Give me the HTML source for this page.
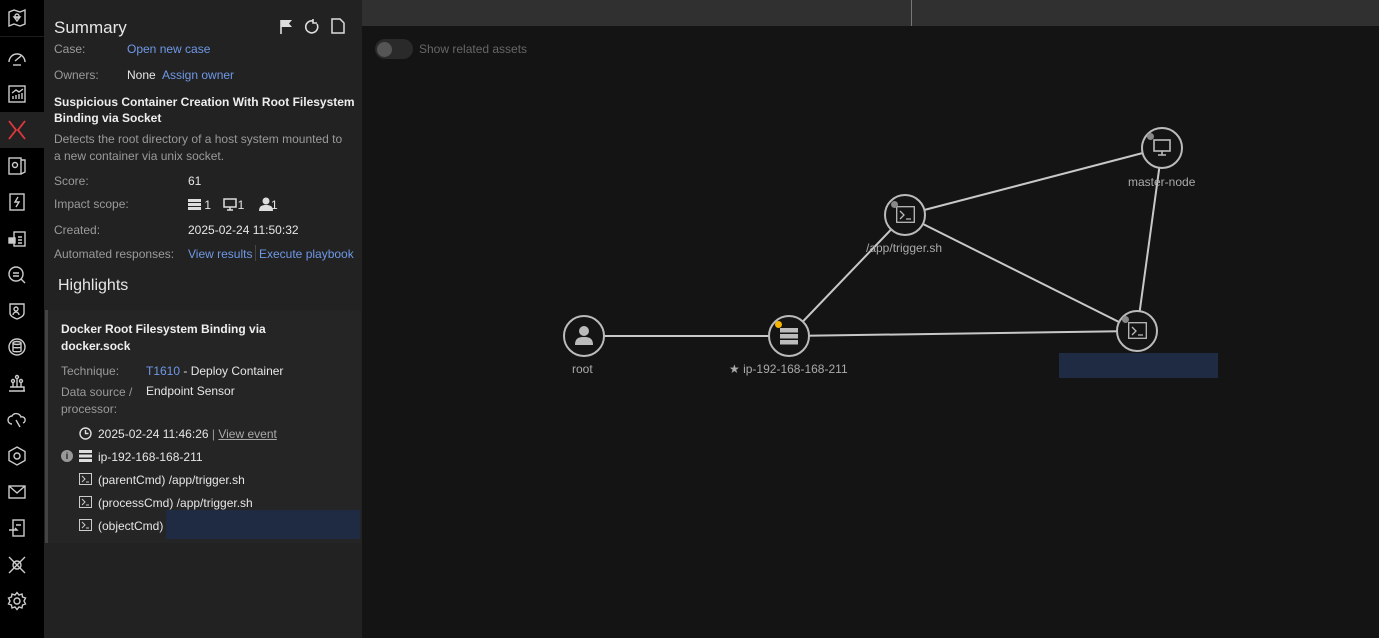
<!DOCTYPE html>
<html><head><meta charset="utf-8"><style>
*{box-sizing:border-box;margin:0;padding:0}
body{width:1379px;height:638px;background:#141414;font-family:"Liberation Sans",Helvetica,sans-serif;overflow:hidden;position:relative;color:#ddd}
.side{position:absolute;left:0;top:0;width:44px;height:638px;background:#000}
.side svg{position:absolute;left:7px;width:20px;height:20px}
.panel{position:absolute;left:44px;top:0;width:318px;height:638px;background:#222}
.top{position:absolute;left:362px;top:0;width:1017px;height:26px;background:#303030}
.t{position:absolute;font-size:12px;white-space:nowrap}
.lbl{color:#9a9a9a}
.lnk{color:#6f98e6}
.w{color:#e6e6e6}
.b{font-weight:bold;color:#eee;font-size:12px}
.node{position:absolute;width:42px;height:42px;border:2px solid #bbb;border-radius:50%;background:#141414}
.nl{position:absolute;font-size:12px;color:#aaa;white-space:nowrap}
</style></head><body>
<div class="side">
<div style="position:absolute;left:0;top:112px;width:44px;height:36px;background:#222"></div>
<div style="position:absolute;left:0;top:36px;width:44px;height:1px;background:#1c1c1c"></div>
<svg style="top:8px" viewBox="0 0 20 20" fill="none" stroke="#ccc" stroke-width="1.4"><path d="M2 4l5-2 6 2 5-2v14l-5 2-6-2-5 2z"/><circle cx="10" cy="8" r="2"/><path d="M10 13l-3-4h6z"/></svg>
<svg style="top:48px" viewBox="0 0 20 20" fill="none" stroke="#ccc" stroke-width="1.4"><path d="M2 14a8 8 0 0116 0"/><path d="M8 13l6-5"/><path d="M6 17h8"/></svg>
<svg style="top:84px" viewBox="0 0 20 20" fill="none" stroke="#ccc" stroke-width="1.4"><rect x="2" y="2" width="16" height="16"/><path d="M6 15v-3M9 15v-4M12 15v-5M15 15v-6M5 9l4-3 3 2 4-3"/></svg>
<svg style="top:120px" viewBox="0 0 20 20" fill="none" stroke="#e0383c" stroke-width="1.8"><path d="M2 1l7 9-7 9M18 1l-7 9 7 9"/></svg>
<svg style="top:156px" viewBox="0 0 20 20" fill="none" stroke="#ccc" stroke-width="1.4"><rect x="2" y="2" width="12" height="16"/><path d="M14 4h4v12l-4 2"/><circle cx="8" cy="9" r="2.5"/></svg>
<svg style="top:192px" viewBox="0 0 20 20" fill="none" stroke="#ccc" stroke-width="1.4"><rect x="3" y="2" width="14" height="16"/><path d="M11 5l-3 5h4l-3 5" /></svg>
<svg style="top:229px" viewBox="0 0 20 20" fill="none" stroke="#ccc" stroke-width="1.4"><rect x="7" y="3" width="11" height="14"/><rect x="2" y="9" width="6" height="5" fill="#ccc"/><path d="M11 8h4M11 11h4M11 14h4"/></svg>
<svg style="top:265px" viewBox="0 0 20 20" fill="none" stroke="#ccc" stroke-width="1.4"><circle cx="9" cy="9" r="7"/><path d="M6 8h6M6 11h6M14 14l4 4"/></svg>
<svg style="top:301px" viewBox="0 0 20 20" fill="none" stroke="#ccc" stroke-width="1.4"><path d="M3 3h14v9c0 3-4 5-7 6-3-1-7-3-7-6z"/><circle cx="9" cy="8" r="2"/><path d="M6 14c0-2 2-3 3-3s3 1 3 3"/></svg>
<svg style="top:337px" viewBox="0 0 20 20" fill="none" stroke="#ccc" stroke-width="1.4"><circle cx="10" cy="10" r="8"/><ellipse cx="10" cy="6" rx="4" ry="1.5"/><path d="M6 6v8c0 1 8 1 8 0V6M6 10c0 1 8 1 8 0"/></svg>
<svg style="top:374px" viewBox="0 0 20 20" fill="none" stroke="#ccc" stroke-width="1.4"><path d="M2 17h16M3 13h14v4M6 13V9M10 13V5M14 13V9"/><circle cx="6" cy="7" r="1.5"/><circle cx="10" cy="3" r="1.5"/><circle cx="14" cy="7" r="1.5"/></svg>
<svg style="top:410px" viewBox="0 0 20 20" fill="none" stroke="#ccc" stroke-width="1.4"><path d="M5 14a4 4 0 010-8 5 5 0 019 1 3 3 0 012 6"/><path d="M9 10l4 7"/></svg>
<svg style="top:446px" viewBox="0 0 20 20" fill="none" stroke="#ccc" stroke-width="1.4"><path d="M10 1l8 4.5v9L10 19l-8-4.5v-9z"/><circle cx="10" cy="10" r="3"/></svg>
<svg style="top:482px" viewBox="0 0 20 20" fill="none" stroke="#ccc" stroke-width="1.4"><rect x="2" y="4" width="16" height="12"/><path d="M2 4l8 7 8-7"/></svg>
<svg style="top:518px" viewBox="0 0 20 20" fill="none" stroke="#ccc" stroke-width="1.4"><rect x="6" y="2" width="11" height="16"/><path d="M2 12h8l-2-2M9 7h5"/></svg>
<svg style="top:555px" viewBox="0 0 20 20" fill="none" stroke="#ccc" stroke-width="1.4"><path d="M2 2l16 16M18 2L2 18"/><circle cx="10" cy="10" r="4"/></svg>
<svg style="top:591px" viewBox="0 0 20 20" fill="none" stroke="#ccc" stroke-width="1.4"><circle cx="10" cy="10" r="3"/><path d="M10 1.5l2 2.5 3-1 .5 3 3 1-1.5 3 1.5 3-3 1-.5 3-3-1-2 2.5-2-2.5-3 1-.5-3-3-1L3 10 1.5 7l3-1 .5-3 3 1z"/></svg>
</div>
<div class="panel">
<div style="position:absolute;left:1px;top:310px;width:316px;height:233px;background:#252525;border-left:3px solid #444"></div>
<div style="position:absolute;left:122px;top:510px;width:194px;height:29px;background:#1f2b42"></div>
</div>
<div class="top"><div style="position:absolute;left:549px;top:0;width:1px;height:26px;background:#777"></div></div>

<div class="t w" style="left:54px;top:18px;font-size:17px">Summary</div>
<svg style="position:absolute;left:279px;top:19px" width="14" height="15" viewBox="0 0 14 15"><path d="M2 1v14" stroke="#ddd" stroke-width="1.6"/><path d="M2 1h11l-3 3.5 3 3.5H2z" fill="#ddd"/></svg>
<svg style="position:absolute;left:304px;top:19px" width="16" height="16" viewBox="0 0 16 16" fill="none" stroke="#ddd" stroke-width="1.6"><path d="M13 5a6 6 0 11-4-3"/><path d="M9 0v4h4" /></svg>
<svg style="position:absolute;left:331px;top:18px" width="14" height="16" viewBox="0 0 14 16" fill="none" stroke="#ddd" stroke-width="1.5"><path d="M1 1h8l4 4v10H1z"/></svg>
<div class="t lbl" style="left:54px;top:42px">Case:</div><div class="t lnk" style="left:127px;top:42px">Open new case</div>
<div class="t lbl" style="left:54px;top:68px">Owners:</div><div class="t w" style="left:127px;top:68px">None</div><div class="t lnk" style="left:162px;top:68px">Assign owner</div>
<div class="t b" style="left:54px;top:94px;line-height:16px">Suspicious Container Creation With Root Filesystem<br>Binding via Socket</div>
<div class="t lbl" style="left:54px;top:131px;line-height:16.5px">Detects the root directory of a host system mounted to<br>a new container via unix socket.</div>
<div class="t lbl" style="left:54px;top:174px">Score:</div><div class="t w" style="left:188px;top:174px">61</div>
<div class="t lbl" style="left:54px;top:197px">Impact scope:</div>
<div class="t w" style="left:188px;top:198px"><span style="display:inline-block;width:13px;height:11px;background:repeating-linear-gradient(#ddd 0 3px,#222 3px 4px);vertical-align:-1px"></span> 1 &nbsp;&nbsp;&nbsp;&nbsp;&nbsp;&nbsp;&nbsp;1 &nbsp;&nbsp;&nbsp;&nbsp;&nbsp;&nbsp;&nbsp;1</div>
<svg style="position:absolute;left:223px;top:198px" width="14" height="13" viewBox="0 0 14 13" fill="none" stroke="#ddd" stroke-width="1.5"><rect x="1" y="1" width="12" height="8"/><path d="M7 9v3M4 12h6"/></svg>
<svg style="position:absolute;left:259px;top:197px" width="14" height="14" viewBox="0 0 14 14" fill="#ddd"><circle cx="7" cy="4" r="3.5"/><path d="M0 14c0-5 3-6 7-6s7 1 7 6z"/></svg>
<div class="t lbl" style="left:54px;top:223px">Created:</div><div class="t w" style="left:188px;top:223px">2025-02-24 11:50:32</div>
<div class="t lbl" style="left:54px;top:247px">Automated responses:</div><div class="t lnk" style="left:188px;top:247px">View results</div>
<div style="position:absolute;left:255px;top:245px;width:1px;height:16px;background:#444"></div>
<div class="t lnk" style="left:259px;top:247px">Execute playbook</div>
<div class="t w" style="left:58px;top:277px;font-size:16px">Highlights</div>
<div class="t b" style="left:61px;top:321px;line-height:16.5px">Docker Root Filesystem Binding via<br>docker.sock</div>
<div class="t lbl" style="left:61px;top:364px">Technique:</div><div class="t w" style="left:146px;top:364px"><span class="lnk">T1610</span> - Deploy Container</div>
<div class="t lbl" style="left:61px;top:384px;line-height:16.5px">Data source /<br>processor:</div><div class="t w" style="left:146px;top:384px">Endpoint Sensor</div>
<svg style="position:absolute;left:79px;top:427px" width="13" height="13" viewBox="0 0 13 13" fill="none" stroke="#ddd" stroke-width="1.4"><circle cx="6.5" cy="6.5" r="5.5"/><path d="M6.5 3v3.5h3"/></svg>
<div class="t w" style="left:98px;top:427px">2025-02-24 11:46:26 <span class="lbl">|</span> <span style="color:#aaa;text-decoration:underline">View event</span></div>
<div style="position:absolute;left:61px;top:450px;width:12px;height:12px;border-radius:50%;background:#999;color:#222;font-size:9px;font-weight:bold;text-align:center;line-height:12px">i</div>
<span style="position:absolute;left:79px;top:450px;width:13px;height:12px;background:repeating-linear-gradient(#ddd 0 3px,#252525 3px 4.5px)"></span>
<div class="t w" style="left:98px;top:450px">ip-192-168-168-211</div>
<svg style="position:absolute;left:79px;top:473px" width="13" height="12" viewBox="0 0 13 12" fill="none" stroke="#ccc"><rect x=".5" y=".5" width="12" height="11"/><path d="M3 3l3 3-3 3M7 9h3"/></svg>
<div class="t w" style="left:98px;top:473px">(parentCmd) /app/trigger.sh</div>
<svg style="position:absolute;left:79px;top:496px" width="13" height="12" viewBox="0 0 13 12" fill="none" stroke="#ccc"><rect x=".5" y=".5" width="12" height="11"/><path d="M3 3l3 3-3 3M7 9h3"/></svg>
<div class="t w" style="left:98px;top:496px">(processCmd) /app/trigger.sh</div>
<svg style="position:absolute;left:79px;top:519px" width="13" height="12" viewBox="0 0 13 12" fill="none" stroke="#ccc"><rect x=".5" y=".5" width="12" height="11"/><path d="M3 3l3 3-3 3M7 9h3"/></svg>
<div class="t w" style="left:98px;top:519px">(objectCmd)</div>

<div style="position:absolute;left:375px;top:39px;width:38px;height:20px;border-radius:10px;background:#2a2a2a"></div>
<div style="position:absolute;left:377px;top:42px;width:15px;height:15px;border-radius:50%;background:#555"></div>
<div class="t" style="left:419px;top:42px;color:#666">Show related assets</div>

<svg style="position:absolute;left:0;top:0" width="1379" height="638"><g stroke="#c8c8c8" stroke-width="2"><line x1="584" y1="336" x2="789" y2="336"/><line x1="789" y1="336" x2="905" y2="215"/><line x1="789" y1="336" x2="1137" y2="331"/><line x1="905" y1="215" x2="1162" y2="148"/><line x1="905" y1="215" x2="1137" y2="331"/><line x1="1162" y1="148" x2="1137" y2="331"/></g></svg>
<div class="node" style="left:563px;top:315px"></div>
<svg style="position:absolute;left:574px;top:325px" width="20" height="20" viewBox="0 0 20 20" fill="#bbb"><circle cx="10" cy="6" r="5"/><path d="M1 20c0-7 4-8 9-8s9 1 9 8z"/></svg>
<div class="node" style="left:768px;top:315px"></div>
<span style="position:absolute;left:780px;top:328px;width:18px;height:17px;background:repeating-linear-gradient(#bbb 0 4.5px,#141414 4.5px 6px)"></span>
<div style="position:absolute;left:775px;top:321px;width:7px;height:7px;border-radius:50%;background:#f5b400"></div>
<div class="node" style="left:884px;top:194px"></div>
<svg style="position:absolute;left:896px;top:206px" width="19" height="17" viewBox="0 0 19 17" fill="none" stroke="#bbb" stroke-width="1.3"><rect x=".7" y=".7" width="17.6" height="15.6"/><path d="M4 5l4 4-4 4M10 13h5"/></svg>
<div style="position:absolute;left:891px;top:201px;width:7px;height:7px;border-radius:50%;background:#888"></div>
<div class="node" style="left:1141px;top:127px"></div>
<svg style="position:absolute;left:1152px;top:138px" width="20" height="19" viewBox="0 0 20 19" fill="none" stroke="#bbb" stroke-width="1.6"><rect x="2" y="2" width="16" height="11"/><path d="M10 13v4M6 17h8"/></svg>
<div style="position:absolute;left:1147px;top:133px;width:7px;height:7px;border-radius:50%;background:#888"></div>
<div class="node" style="left:1116px;top:310px"></div>
<svg style="position:absolute;left:1128px;top:322px" width="19" height="17" viewBox="0 0 19 17" fill="none" stroke="#bbb" stroke-width="1.3"><rect x=".7" y=".7" width="17.6" height="15.6"/><path d="M4 5l4 4-4 4M10 13h5"/></svg>
<div style="position:absolute;left:1122px;top:316px;width:7px;height:7px;border-radius:50%;background:#888"></div>
<div style="position:absolute;left:1059px;top:353px;width:159px;height:25px;background:#1f2b42"></div>
<div class="nl" style="left:572px;top:362px">root</div>
<div class="nl" style="left:729px;top:362px">★ ip-192-168-168-211</div>
<div class="nl" style="left:866px;top:241px">/app/trigger.sh</div>
<div class="nl" style="left:1128px;top:175px">master-node</div>
</body></html>
